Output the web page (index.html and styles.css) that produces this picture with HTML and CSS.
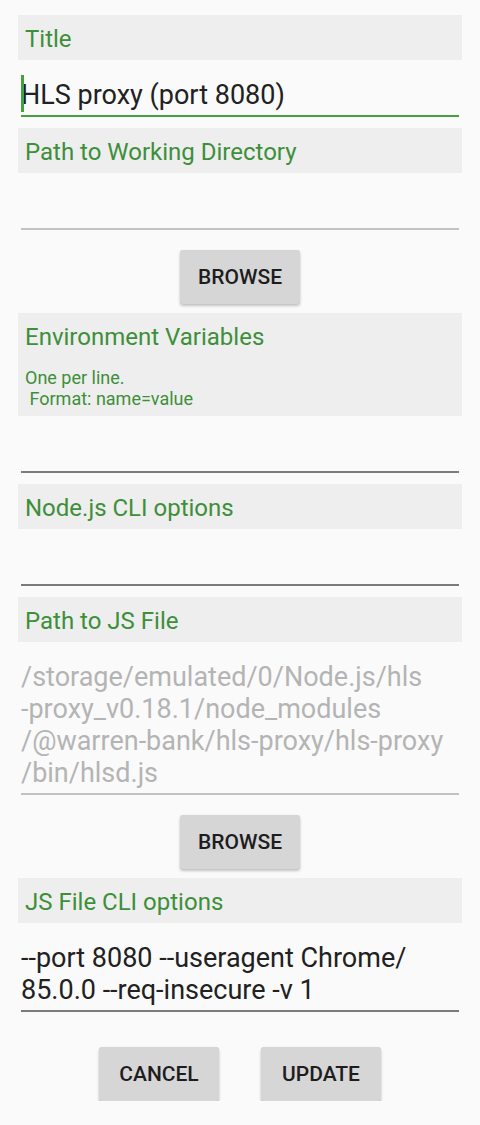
FILE: index.html
```html
<!DOCTYPE html>
<html>
<head>
<meta charset="utf-8">
<link rel="stylesheet" href="styles.css">
</head>
<body>
<div class="form">
  <div class="label"><div class="label-title">Title</div></div>
  <div class="field focused"><span class="cursor"></span>HLS proxy (port 8080)</div>

  <div class="label"><div class="label-title">Path to Working Directory</div></div>
  <div class="field disabled"></div>
  <div class="btn-row"><button class="btn">Browse</button></div>

  <div class="label">
    <div class="label-title">Environment Variables</div>
    <div class="label-hint">One per line.
 Format: name=value</div>
  </div>
  <div class="field"></div>

  <div class="label"><div class="label-title">Node.js CLI options</div></div>
  <div class="field"></div>

  <div class="label"><div class="label-title">Path to JS File</div></div>
  <div class="field disabled">/storage/emulated/0/Node.js/hls<br>-proxy_v0.18.1/node_modules<br>/@warren-bank/hls-proxy/hls-proxy<br>/bin/hlsd.js</div>
  <div class="btn-row"><button class="btn">Browse</button></div>

  <div class="label"><div class="label-title">JS File CLI options</div></div>
  <div class="field">--port 8080 --useragent Chrome/<br>85.0.0 --req-insecure -v 1</div>

  <div class="actions">
    <button class="btn">Cancel</button>
    <button class="btn">Update</button>
  </div>
</div>
</body>
</html>
```

FILE: styles.css
```css
html, body {
  margin: 0;
  padding: 0;
  background: #fafafa;
}

body {
  font-family: Roboto, "Noto Sans", "Liberation Sans", sans-serif;
  color: #212121;
}

.form {
  display: flex;
  flex-direction: column;
  padding: 15px 18px 0;
}

.label {
  background: #eeeeee;
  padding: 10px 7px 7px;
  margin-top: 11px;
  color: #3d8f3a;
}

.label:first-child,
.btn-row + .label {
  margin-top: 0;
}

.label-title {
  font-size: 24px;
  line-height: 28px;
}

.label-hint {
  font-size: 18px;
  line-height: 21px;
  margin-top: 16px;
  white-space: pre-wrap;
}

.field {
  position: relative;
  margin: 0 3px;
  padding: 19px 0 4px 0;
  min-height: 32px;
  font-size: 27px;
  line-height: 32px;
  color: #212121;
  border-bottom: 2px solid #7b7b7b;
  white-space: nowrap;
}

.field.disabled {
  color: #b4b4b4;
  border-bottom-color: #c2c2c2;
}

.field.focused {
  border-bottom-color: #45a042;
}

.cursor {
  position: absolute;
  left: 0;
  top: 15px;
  width: 2.5px;
  height: 37px;
  background: #45a042;
}

.btn-row {
  display: flex;
  justify-content: center;
  padding: 20px 0 9px;
}

.btn {
  width: 120px;
  height: 54px;
  border: none;
  border-radius: 3px;
  background: #d6d6d7;
  color: #1d1d1d;
  font-family: Roboto, "Noto Sans", "Liberation Sans", sans-serif;
  font-size: 21px;
  font-weight: 500;
  text-transform: uppercase;
  padding: 0;
  box-shadow: 0 2px 3px rgba(0, 0, 0, 0.22), 0 0 1px rgba(0, 0, 0, 0.12);
}

.actions {
  display: flex;
  justify-content: center;
  gap: 42px;
  margin-top: 35px;
}
```
